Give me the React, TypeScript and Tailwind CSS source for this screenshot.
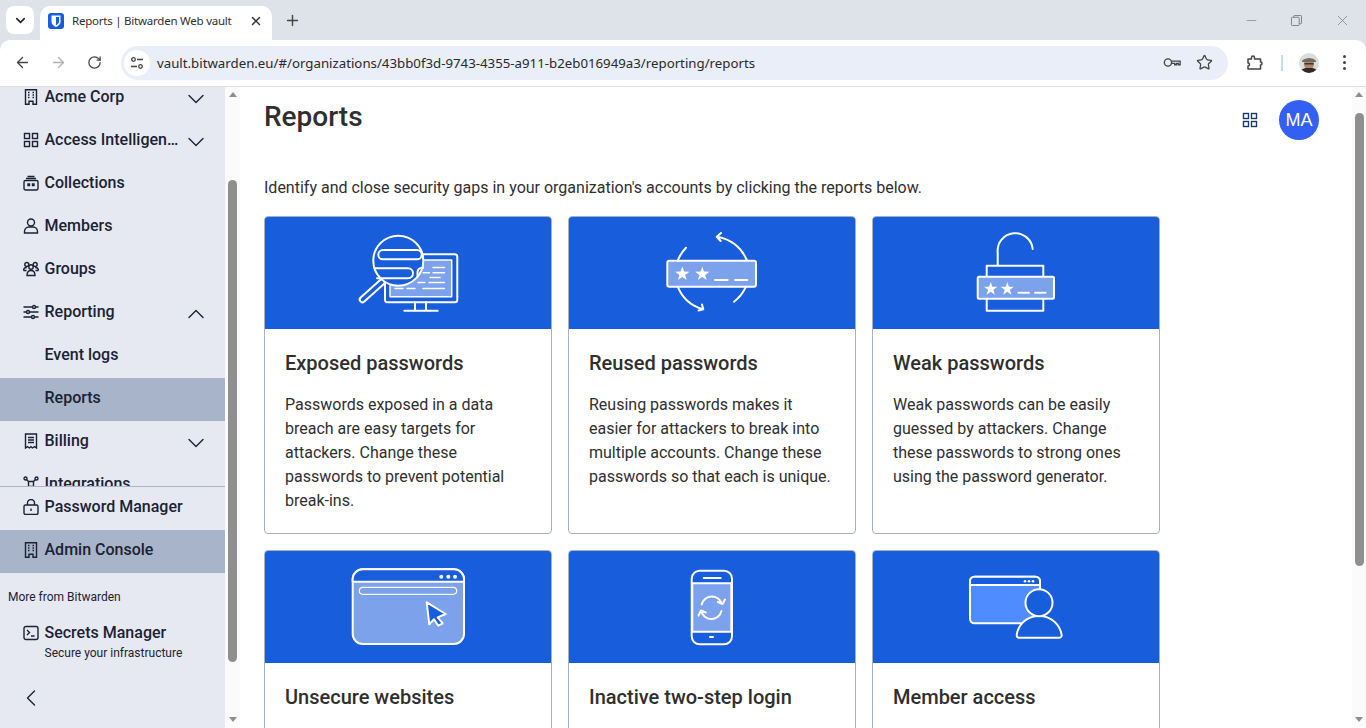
import { ArrowLeft, ArrowRight, ChevronDown, ChevronLeft, ChevronUp, Minus, Plus, RotateCw, Star, X } from "lucide-react";
import type { ReactNode } from "react";

const WHITE = "#ffffff";
const LIGHT = "#7ba2ea";
const BLUE = "#175ddc";

function Ico({ children }: { children: ReactNode }) {
  return (
    <svg viewBox="0 0 16 16" fill="none" stroke="currentColor" strokeWidth="1.4" className="h-4 w-4 shrink-0">
      {children}
    </svg>
  );
}

const BuildingIcon = () => (
  <Ico>
    <path d="M2.5 .8h11v14.4h-3.5v-3h-4v3h-3.5z" />
    <path d="M5 3.5h1.5M9.5 3.5h1.5M5 6h1.5M9.5 6h1.5M5 8.5h1.5M9.5 8.5h1.5" strokeWidth="1.5" />
  </Ico>
);
const GridIcon = () => (
  <Ico>
    <rect x="1.5" y="1.5" width="5" height="5" />
    <rect x="9.5" y="1.5" width="5" height="5" />
    <rect x="1.5" y="9.5" width="5" height="5" />
    <rect x="9.5" y="9.5" width="5" height="5" />
  </Ico>
);
const CollectionIcon = () => (
  <Ico>
    <rect x="1" y="5.5" width="14" height="9.5" rx="1.5" />
    <path d="M3 3.5h10M4.5 1.5h7" />
    <path d="M5 9h1.5v1.5h-1.5zM9.5 9h1.5v1.500h-1.5z" />
  </Ico>
);
const PersonIcon = () => (
  <Ico>
    <circle cx="8" cy="4.5" r="3.5" />
    <path d="M1.5 15v-1.500c0-2.500 2-4.500 4.500-4.500h4c2.500 0 4.500 2 4.500 4.500v1.500z" />
  </Ico>
);
const GroupIcon = () => (
  <Ico>
    <circle cx="3.8" cy="3.5" r="2" />
    <circle cx="12.2" cy="3.5" r="2" />
    <circle cx="8" cy="6" r="2.2" />
    <path d="M.5 9.500c0-2 1.500-3 3.300-3M15.500 9.500c0-2-1.500-3-3.300-3M.5 9.500h3M12.500 9.500h3M4 14.500c0-3 1.500-5 4-5s4 2 4 5z" />
  </Ico>
);
const SlidersIcon = () => (
  <Ico>
    <path d="M.5 3h9M12.500 3h3M.5 8h3M6.500 8h9M.5 13h8M11.500 13h4" />
    <circle cx="11" cy="3" r="1.5" />
    <circle cx="5" cy="8" r="1.5" />
    <circle cx="10" cy="13" r="1.5" />
  </Ico>
);
const ReceiptIcon = () => (
  <Ico>
    <path d="M2.500 1h11v14l-2-1.300-2 1.300-1.500-1.300-1.500 1.300-2-1.300-2 1.300z" />
    <path d="M5 4.500h6M5 7h6M5 9.500h6" />
  </Ico>
);
const IntegrationIcon = () => (
  <Ico>
    <circle cx="2.5" cy="2.5" r="1.5" />
    <circle cx="13.5" cy="2.5" r="1.5" />
    <circle cx="2.5" cy="13.5" r="1.5" />
    <circle cx="13.5" cy="13.5" r="1.5" />
    <path d="M3.500 3.500l2 2h5l2-2M3.500 12.500l2-2h5l2 2M5.500 5.500v5M10.500 5.500v5" />
  </Ico>
);
const LockIcon = () => (
  <Ico>
    <rect x="1" y="6" width="14" height="9.5" rx="1.5" />
    <path d="M4.500 6v-2a3.500 3.500 0 0 1 7 0v2M8 9.500v2.500" />
  </Ico>
);
const TerminalIcon = () => (
  <Ico>
    <rect x="1" y="1.5" width="14" height="13" rx="2" />
    <path d="M4 5l2.500 2.500-2.500 2.500M8 11h3.500" />
  </Ico>
);

type NavItem = { label: string; icon?: ReactNode; chevron?: "up" | "down"; active?: boolean };

const NAV: NavItem[] = [
  { label: "Acme Corp", icon: <BuildingIcon />, chevron: "down" },
  { label: "Access Intelligence", icon: <GridIcon />, chevron: "down" },
  { label: "Collections", icon: <CollectionIcon /> },
  { label: "Members", icon: <PersonIcon /> },
  { label: "Groups", icon: <GroupIcon /> },
  { label: "Reporting", icon: <SlidersIcon />, chevron: "up" },
  { label: "Event logs" },
  { label: "Reports", active: true },
  { label: "Billing", icon: <ReceiptIcon />, chevron: "down" },
  { label: "Integrations", icon: <IntegrationIcon /> },
];

function NavRow({ item }: { item: NavItem }) {
  return (
    <div className={`flex h-[43px] items-center pb-[3px] pl-[23px] pr-[15px] ${item.active ? "bg-[#a8b4c9]" : ""}`}>
      <span className="mr-[5.5px] w-[16px] shrink-0">{item.icon}</span>
      <span className={`text-[16px] font-medium ${item.chevron ? "max-w-[135px] truncate" : "whitespace-nowrap"}`}>{item.label}</span>
      {item.chevron === "down" && <ChevronDown size={28} strokeWidth={1.2} className="-mb-2 -mt-1 ml-auto shrink-0" />}
      {item.chevron === "up" && <ChevronUp size={28} strokeWidth={1.2} className="-mb-2 -mt-1 ml-auto shrink-0" />}
    </div>
  );
}

function Scrollbar({ top, height, className }: { top: number; height: number; className: string }) {
  return (
    <div className={`flex h-full shrink-0 flex-col items-center bg-[#fbfbfb] ${className}`}>
      <div className="mt-[5px] h-0 w-0 border-x-[4px] border-b-[5px] border-x-transparent border-b-[#8f8f8f]" />
      <div className="w-[9px] rounded-full bg-[#8f8f8f]" style={{ marginTop: top, height }} />
      <div className="mt-auto mb-[6px] h-0 w-0 border-x-[4px] border-t-[5px] border-x-transparent border-t-[#8f8f8f]" />
    </div>
  );
}

function star(cx: number, cy: number, r: number) {
  const pts: string[] = [];
  for (let i = 0; i < 10; i++) {
    const rad = i % 2 === 0 ? r : r * 0.4;
    const a = (Math.PI / 5) * i - Math.PI / 2;
    pts.push(`${(cx + rad * Math.cos(a)).toFixed(2)},${(cy + rad * Math.sin(a)).toFixed(2)}`);
  }
  return pts.join(" ");
}

// illustrations are drawn in page coordinates, the viewBox is the card header
function Art({ x, y, children }: { x: number; y: number; children: ReactNode }) {
  return (
    <svg viewBox={`${x} ${y} 286 112`} width="286" height="112" fill="none" stroke={WHITE} strokeWidth="2" strokeLinecap="round" strokeLinejoin="round" className="block">
      {children}
    </svg>
  );
}

const ExposedArt = () => (
  <Art x={265} y={217}>
    <rect x="385" y="254.3" width="72.3" height="48" rx="2.5" />
    <rect x="390" y="260" width="61.7" height="36.7" fill={LIGHT} strokeWidth="1.5" />
    <path d="M415 302.300v8.400M426 302.300v8.400M404.300 310.700h33.400" />
    <path d="M433 267.500h11.500M423 272.700h6.500M433 272.700h11.500M430 277.500h10M418 282.500h7M429 282.500h15.500M395 288.500h8M407 288.500h8M423 288.500h21.500" strokeWidth="1.5" />
    <path d="M382 282L362.500 299.500" strokeWidth="7.500" />
    <path d="M382 282L362.500 299.500" strokeWidth="3.500" stroke={BLUE} />
    <circle cx="398.3" cy="260.7" r="25" fill={BLUE} />
    <rect x="378.3" y="250" width="43.4" height="9.3" rx="4.6" />
    <path d="M374.500 268.300H408a5 5 0 0 1 0 10H377" />
    <path d="M417.500 277v-5a4.500 4.500 0 0 1 4.500-4h1" />
  </Art>
);

const ReusedArt = () => (
  <Art x={569} y={217}>
    <rect x="667.3" y="260.7" width="88.7" height="26" rx="2" fill={LIGHT} />
    <polygon points={star(682.3, 274, 7.5)} fill={WHITE} stroke="none" />
    <polygon points={star(702.3, 274, 7.5)} fill={WHITE} stroke="none" />
    <path d="M715 280h12.700M735 280h12.300" />
    <path d="M746.700 260A38 38 0 0 0 716.700 236.700M721 233l-4.300 3.700 4 4.300" />
    <path d="M686 247.700A38 38 0 0 0 677.700 260.700" />
    <path d="M677.700 286.700A38 38 0 0 0 703.300 309.300M698.500 310.500l4.800-1.200-1.300-4.800" />
    <path d="M746 286.700A38 38 0 0 1 734 301.700" />
  </Art>
);

const WeakArt = () => (
  <Art x={873} y={217}>
    <path d="M997.700 265V252.500A17.500 17.500 0 0 1 1032.700 249" />
    <rect x="986.7" y="265.7" width="56.6" height="45" />
    <rect x="977.7" y="276.7" width="76.3" height="22" rx="1.5" fill={LIGHT} />
    <polygon points={star(990.7, 289, 7)} fill={WHITE} stroke="none" />
    <polygon points={star(1007.3, 289, 7)} fill={WHITE} stroke="none" />
    <path d="M1018.300 292.700h10.700M1035 292.700h10.700" />
  </Art>
);

const UnsecureArt = () => (
  <Art x={265} y={551}>
    <rect x="352.7" y="569.3" width="111.3" height="74.7" rx="10" fill={LIGHT} />
    <path d="M352.700 581.700v-2.400a10 10 0 0 1 10-10h91.300a10 10 0 0 1 10 10v2.400z" fill={BLUE} />
    <circle cx="441.3" cy="576.7" r="2" fill={WHITE} stroke="none" />
    <circle cx="448.3" cy="576.7" r="2" fill={WHITE} stroke="none" />
    <circle cx="455" cy="576.7" r="2" fill={WHITE} stroke="none" />
    <rect x="359.3" y="587.3" width="97.4" height="7" rx="3.5" strokeWidth="1.2" />
    <polygon points="426.7,602.3 445.7,614 437.7,617.3 442.7,623.3 438.3,625.7 434,619.3 429.3,624.3" fill={BLUE} />
  </Art>
);

const TwoStepArt = () => (
  <Art x={569} y={551}>
    <rect x="691.7" y="570.7" width="40.3" height="73.6" rx="8" />
    <rect x="692.3" y="583.3" width="39" height="48.4" fill={LIGHT} />
    <path d="M703.700 578h17M710 637h3" />
    <path d="M701.700 604.500A10.500 10.500 0 0 1 722 604M725 599.500l-2.500 4.500-4.700-2" />
    <path d="M721.500 611A10.500 10.500 0 0 1 701 610.500M698.500 615.500l2.500-5 4.800 2" />
  </Art>
);

const MemberArt = () => (
  <Art x={873} y={551}>
    <rect x="970" y="576.7" width="70" height="46.6" rx="4.5" fill="#4e8cff" />
    <path d="M970 585v-3.800a4.500 4.500 0 0 1 4.500-4.500h61a4.500 4.500 0 0 1 4.500 4.500v3.800z" fill={BLUE} />
    <circle cx="1025" cy="581.3" r="1.3" fill={WHITE} stroke="none" />
    <circle cx="1029" cy="581.3" r="1.3" fill={WHITE} stroke="none" />
    <circle cx="1033" cy="581.3" r="1.3" fill={WHITE} stroke="none" />
    <path d="M1019 637.700h40.500a2.200 2.200 0 0 0 2.200-2.500C1060 624 1051 616 1039 616s-21 8-22.300 19.200a2.200 2.200 0 0 0 2.300 2.500z" fill={BLUE} />
    <circle cx="1039" cy="602.7" r="13.5" fill={BLUE} />
  </Art>
);

type Report = { title: string; body?: string; art: ReactNode };

const REPORTS: Report[] = [
  { title: "Exposed passwords", body: "Passwords exposed in a data breach are easy targets for attackers. Change these passwords to prevent potential break-ins.", art: <ExposedArt /> },
  { title: "Reused passwords", body: "Reusing passwords makes it easier for attackers to break into multiple accounts. Change these passwords so that each is unique.", art: <ReusedArt /> },
  { title: "Weak passwords", body: "Weak passwords can be easily guessed by attackers. Change these passwords to strong ones using the password generator.", art: <WeakArt /> },
  { title: "Unsecure websites", art: <UnsecureArt /> },
  { title: "Inactive two-step login", art: <TwoStepArt /> },
  { title: "Member access", art: <MemberArt /> },
];

function ReportCard({ report }: { report: Report }) {
  return (
    <div className="h-[318px] overflow-hidden rounded-[4px] border border-[#a8b0bd] bg-white">
      <div className="h-[112px] bg-[#175ddc]">{report.art}</div>
      <div className="px-5 pt-[20px]">
        <h2 className="text-[20px] font-medium leading-[28px] text-[#2f2f2f]">{report.title}</h2>
        <p className="mt-[16px] text-[16px] leading-[24px] text-[#2f2f2f]">{report.body}</p>
      </div>
    </div>
  );
}

function BrowserChrome() {
  return (
    <div className="h-[87px] shrink-0 bg-[#dee2e9] font-['Noto_Sans',sans-serif] text-[#3c3c3c]">
      <div className="flex h-[40px] items-end">
        <div className="mb-[6px] ml-[6px] flex h-[28px] w-[28px] items-center justify-center rounded-[8px] bg-white">
          <ChevronDown size={15} strokeWidth={2.5} className="text-[#222]" />
        </div>
        <div className="ml-[6px] flex h-[34px] w-[232px] items-center rounded-t-[10px] bg-white pb-[5px] pl-[8px]">
          <svg viewBox="0 0 16 16" className="h-4 w-4 shrink-0">
            <rect width="16" height="16" rx="3" fill="#175ddc" />
            <path d="M3.500 2.500h9v6.500c0 2.500-2.500 4-4.500 5-2-1-4.500-2.500-4.500-5z" fill="#fff" />
            <path d="M8 4v8.300c1.500-.8 3-2 3-3.500v-4.800z" fill="#175ddc" />
          </svg>
          <span className="ml-[8px] whitespace-nowrap text-[11.5px] tracking-[-0.23px] text-[#2f2f2f]">Reports | Bitwarden Web vault</span>
          <X size={14} strokeWidth={2.5} className="ml-auto mr-[9px] text-[#333]" />
        </div>
        <Plus size={17} strokeWidth={2} className="mb-[11px] ml-[12px] text-[#444]" />
        <div className="mb-[11px] ml-auto flex items-center text-[#777]">
          <Minus size={15} strokeWidth={1} className="mr-[32px]" />
          <svg viewBox="0 0 12 12" fill="none" stroke="currentColor" strokeWidth="1" className="mr-[32px] h-[11px] w-[11px]">
            <rect x=".5" y="2.5" width="8.5" height="9" rx="1" />
            <path d="M3 2.500v-1a1 1 0 0 1 1-1h6.500a1 1 0 0 1 1 1v7a1 1 0 0 1-1 1h-1.500" />
          </svg>
          <X size={17} strokeWidth={1} className="mr-[15px]" />
        </div>
      </div>
      <div className="flex h-[47px] items-center rounded-t-[10px] border-b border-[#e0e0e0] bg-white pb-[1px]">
        <div className="ml-[4px] flex w-[36px] justify-center"><ArrowLeft size={17} strokeWidth={1.8} className="text-[#444]" /></div>
        <div className="flex w-[36px] justify-center"><ArrowRight size={17} strokeWidth={1.8} className="text-[#b0b0b0]" /></div>
        <div className="flex w-[36px] justify-center"><RotateCw size={15} strokeWidth={2} className="text-[#444]" /></div>
        <div className="ml-[9px] flex h-[34px] w-[1107px] items-center rounded-full bg-[#e9eef8] pl-[3px] pr-[15px]">
          <div className="flex h-[26px] w-[26px] items-center justify-center rounded-full bg-white">
            <svg viewBox="0 0 14 14" fill="none" stroke="#444" strokeWidth="1.3" className="h-[14px] w-[14px]">
              <circle cx="3.5" cy="3.5" r="1.8" />
              <path d="M7 3.500h6M1 10.500h6" />
              <circle cx="10.5" cy="10.5" r="1.8" />
            </svg>
          </div>
          <span className="ml-[7px] mt-[2px] whitespace-nowrap text-[13.25px] text-[#2a2a2a]">vault.bitwarden.eu/#/organizations/43bb0f3d-9743-4355-a911-b2eb016949a3/reporting/reports</span>
          <svg viewBox="0 0 20 12" fill="none" stroke="#444" strokeWidth="1.5" className="ml-auto h-[11px] w-[18px]">
            <circle cx="5.5" cy="6" r="4" />
            <path d="M9.500 4.500h9.500v4h-2v-1.500h-2v1.500h-2v-1.500h-3.500" />
          </svg>
          <Star size={17} strokeWidth={1.8} className="ml-[15px] text-[#444]" />
        </div>
        <svg viewBox="0 0 16 15" fill="none" stroke="#444" strokeWidth="1.5" className="ml-[19px] h-[15px] w-[16px]">
          <path d="M1 4h3.500v-1.500a1.500 1.500 0 0 1 3 0v1.500h6v3a1.500 1.500 0 0 1 0 3v4h-12.500v-3a1.500 1.500 0 0 0 0-3z" strokeLinejoin="round" />
        </svg>
        <div className="ml-[18px] h-[16px] w-[1.5px] bg-[#c5d9f8]" />
        <svg viewBox="0 0 20 20" className="ml-[16px] h-5 w-5">
          <clipPath id="face"><circle cx="10" cy="10" r="10" /></clipPath>
          <g clipPath="url(#face)">
            <rect width="20" height="20" fill="#d9dde0" />
            <ellipse cx="10" cy="11" rx="5" ry="6" fill="#b5836a" />
            <path d="M3 8c2-3 11-4 14 0v1h-14z" fill="#6f6a62" />
            <rect x="5.5" y="10" width="9" height="1.5" fill="#3b3430" />
            <path d="M1 20c1-5 5-5 9-5s8 0 9 5z" fill="#2d2a2a" />
          </g>
        </svg>
        <div className="ml-[24px] flex flex-col gap-[3px]">
          <span className="h-[3px] w-[3px] rounded-full bg-[#444]" />
          <span className="h-[3px] w-[3px] rounded-full bg-[#444]" />
          <span className="h-[3px] w-[3px] rounded-full bg-[#444]" />
        </div>
      </div>
    </div>
  );
}

function Sidebar() {
  return (
    <aside className="flex h-full w-[225px] shrink-0 flex-col bg-[#e6e9f2] text-[#1b2233]">
      <div className="h-[399px] shrink-0 overflow-hidden">
        <div className="-mt-[10px]">
          {NAV.map((item) => (
            <NavRow key={item.label} item={item} />
          ))}
        </div>
      </div>
      <div className="border-t border-[#a8b4c9]">
        <NavRow item={{ label: "Password Manager", icon: <LockIcon /> }} />
        <NavRow item={{ label: "Admin Console", icon: <BuildingIcon />, active: true }} />
      </div>
      <p className="ml-[8px] mt-[16px] text-[12px] leading-[16px]">More from Bitwarden</p>
      <div className="mt-[17px] flex pl-[23px]">
        <span className="mr-[5.5px] mt-[3px]"><TerminalIcon /></span>
        <div>
          <div className="text-[16px] font-medium leading-[22px]">Secrets Manager</div>
          <div className="text-[12px] leading-[18px]">Secure your infrastructure</div>
        </div>
      </div>
      <ChevronLeft size={28} strokeWidth={1.2} className="ml-[17px] mt-[22px]" />
    </aside>
  );
}

export default function App() {
  return (
    <div className="flex h-[728px] w-[1366px] flex-col overflow-hidden bg-white font-['Roboto',sans-serif]">
      <BrowserChrome />
      <div className="flex min-h-0 flex-1">
        <Sidebar />
        <Scrollbar top={83} height={482} className="w-[15px]" />
        <main className="min-w-0 flex-1 pl-[24px] pr-[33px]">
          <div className="flex h-[53px] items-start pt-[13px]">
            <h1 className="mt-[1px] text-[28px] font-medium leading-[32px] text-[#2f2f2f]">Reports</h1>
            <div className="ml-auto flex items-center">
              <span className="text-[#1f3a66]"><GridIcon /></span>
              <div className="ml-[21px] flex h-[40px] w-[40px] items-center justify-center rounded-full bg-[#3360f2] font-['Liberation_Sans',sans-serif] text-[18px] text-white">MA</div>
            </div>
          </div>
          <p className="mt-[36px] text-[16px] leading-[24px] text-[#2f2f2f]">
            Identify and close security gaps in your organization's accounts by clicking the reports below.
          </p>
          <div className="mt-[16px] grid w-[896px] grid-cols-3 gap-4">
            {REPORTS.map((r) => (
              <ReportCard key={r.title} report={r} />
            ))}
          </div>
        </main>
        <Scrollbar top={16} height={453} className="w-[14px]" />
      </div>
    </div>
  );
}
